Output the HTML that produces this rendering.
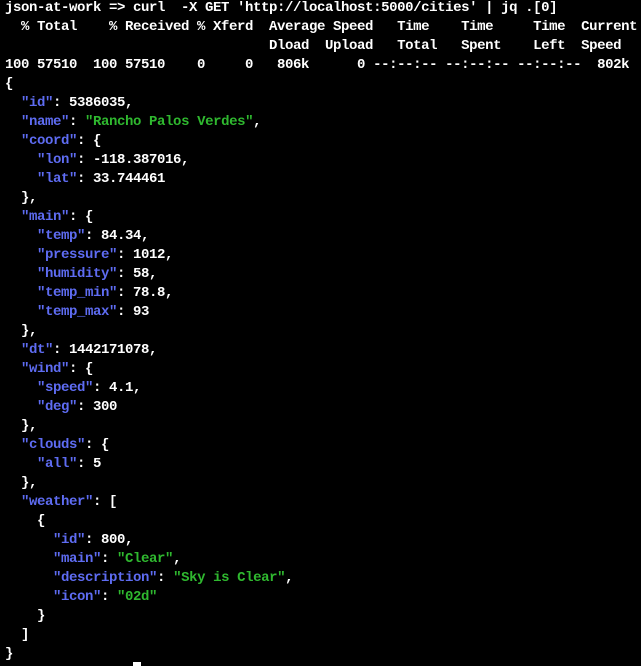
<!DOCTYPE html>
<html><head><style>
html,body{margin:0;padding:0;background:#000;width:641px;height:666px;overflow:hidden}
pre{margin:0;padding:0 0 0 5px;position:relative;top:-1px;font-family:"Liberation Mono",monospace;font-weight:bold;font-size:14px;letter-spacing:-0.4px;line-height:19px;color:#fff}
.k{color:#5e6cf2}.s{color:#2fb82f}
.cur{position:absolute;left:133px;top:662px;width:8px;height:4px;background:#fff}
</style></head><body><pre>json-at-work =&gt; curl  -X GET 'http://localhost:5000/cities' | jq .[0]
  % Total    % Received % Xferd  Average Speed   Time    Time     Time  Current
                                 Dload  Upload   Total   Spent    Left  Speed
100 57510  100 57510    0     0   806k      0 --:--:-- --:--:-- --:--:--  802k
{
  <span class="k">"id"</span>: 5386035,
  <span class="k">"name"</span>: <span class="s">"Rancho Palos Verdes"</span>,
  <span class="k">"coord"</span>: {
    <span class="k">"lon"</span>: -118.387016,
    <span class="k">"lat"</span>: 33.744461
  },
  <span class="k">"main"</span>: {
    <span class="k">"temp"</span>: 84.34,
    <span class="k">"pressure"</span>: 1012,
    <span class="k">"humidity"</span>: 58,
    <span class="k">"temp_min"</span>: 78.8,
    <span class="k">"temp_max"</span>: 93
  },
  <span class="k">"dt"</span>: 1442171078,
  <span class="k">"wind"</span>: {
    <span class="k">"speed"</span>: 4.1,
    <span class="k">"deg"</span>: 300
  },
  <span class="k">"clouds"</span>: {
    <span class="k">"all"</span>: 5
  },
  <span class="k">"weather"</span>: [
    {
      <span class="k">"id"</span>: 800,
      <span class="k">"main"</span>: <span class="s">"Clear"</span>,
      <span class="k">"description"</span>: <span class="s">"Sky is Clear"</span>,
      <span class="k">"icon"</span>: <span class="s">"02d"</span>
    }
  ]
}</pre><div class="cur"></div></body></html>
